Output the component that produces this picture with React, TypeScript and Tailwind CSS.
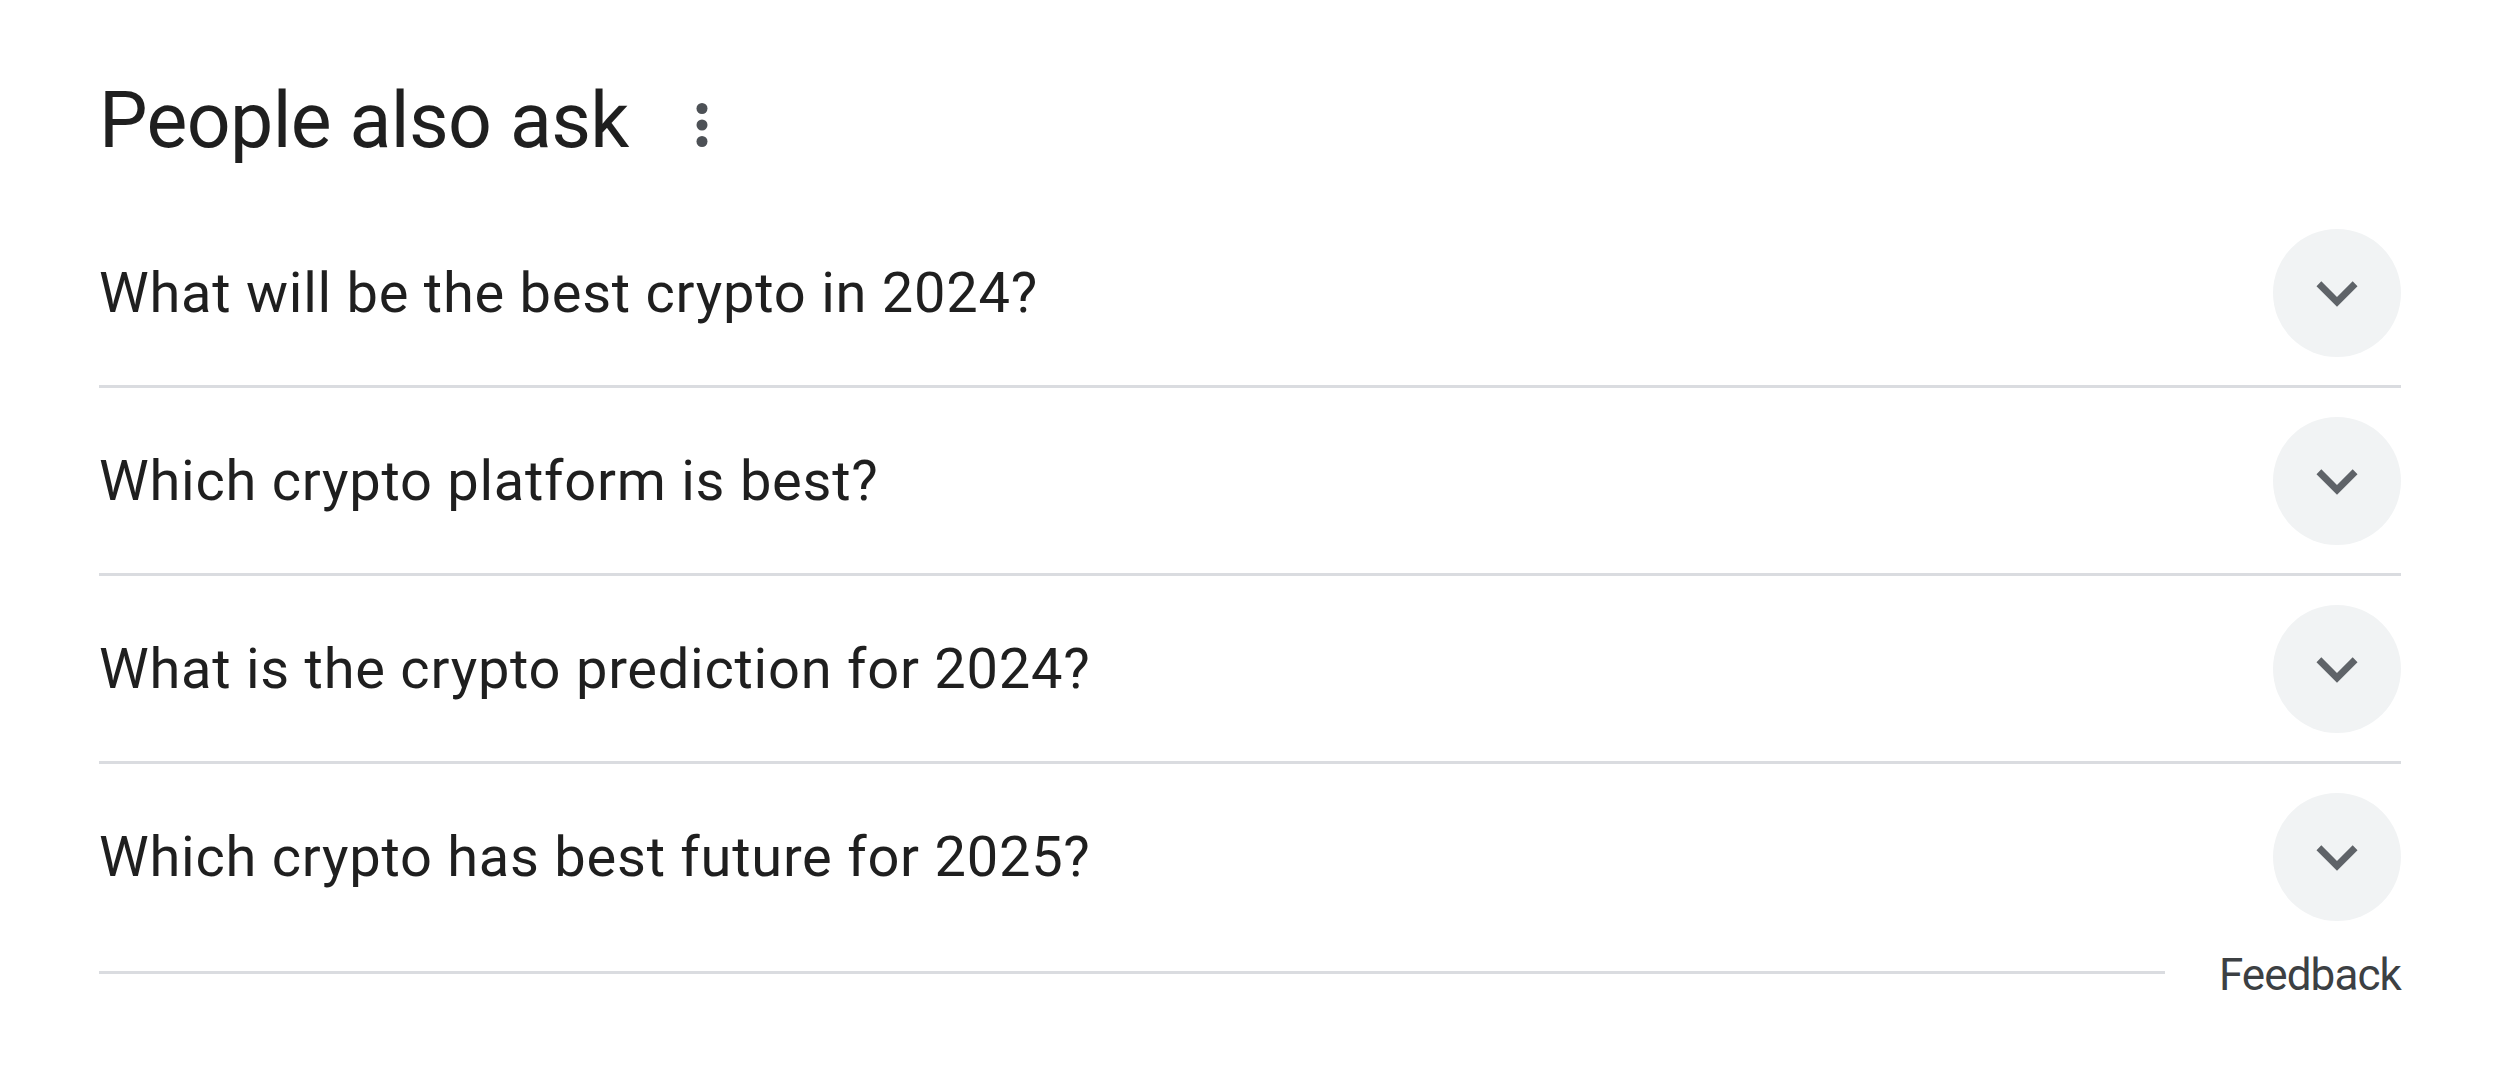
const questions = [
  "What will be the best crypto in 2024?",
  "Which crypto platform is best?",
  "What is the crypto prediction for 2024?",
  "Which crypto has best future for 2025?",
];

function MoreVert() {
  return (
    <svg viewBox="0 0 24 24" className="h-[66px] w-[66px]" fill="#4d5156">
      <circle cx="12" cy="6" r="2" />
      <circle cx="12" cy="12" r="2" />
      <circle cx="12" cy="18" r="2" />
    </svg>
  );
}

function ExpandMore() {
  return (
    <svg viewBox="0 0 24 24" className="h-[82px] w-[82px]" fill="#5f6368">
      <path d="M16.59 8.59L12 13.17 7.41 8.59 6 10l6 6 6-6z" />
    </svg>
  );
}

function QuestionRow({ text, last }: { text: string; last?: boolean }) {
  return (
    <div
      className={
        last
          ? "flex h-[185px] items-center justify-between"
          : "flex h-[188px] items-center justify-between border-b-[3px] border-[#dadce0]"
      }
    >
      <span className="text-[56px] leading-[56px] tracking-[0.75px] text-[#1f1f1f]">
        {text}
      </span>
      <div className="flex h-[128px] w-[128px] items-center justify-center rounded-full bg-[#f1f3f4]">
        <ExpandMore />
      </div>
    </div>
  );
}

export default function App() {
  return (
    <div
      className="h-[1066px] w-[2500px] bg-white px-[99px]"
      style={{ fontFamily: "Roboto, 'Noto Sans', sans-serif" }}
    >
      {/* header */}
      <div className="flex h-[200px] items-start gap-[40px] pt-[83px]">
        <h2 className="text-[77px] font-normal leading-[77px] tracking-[-0.6px] text-[#1f1f1f]">
          People also ask
        </h2>
        <div className="mt-[9px]">
          <MoreVert />
        </div>
      </div>

      <div className="flex flex-col">
        {questions.map((q, i) => (
          <QuestionRow key={q} text={q} last={i === questions.length - 1} />
        ))}
      </div>

      <div className="flex h-[46px] items-center gap-[54px]">
        <div className="h-[3px] flex-1 bg-[#dadce0]" />
        <span className="pt-[6px] text-[44px] leading-[44px] tracking-[-0.9px] text-[#3c4043]">
          Feedback
        </span>
      </div>
    </div>
  );
}
